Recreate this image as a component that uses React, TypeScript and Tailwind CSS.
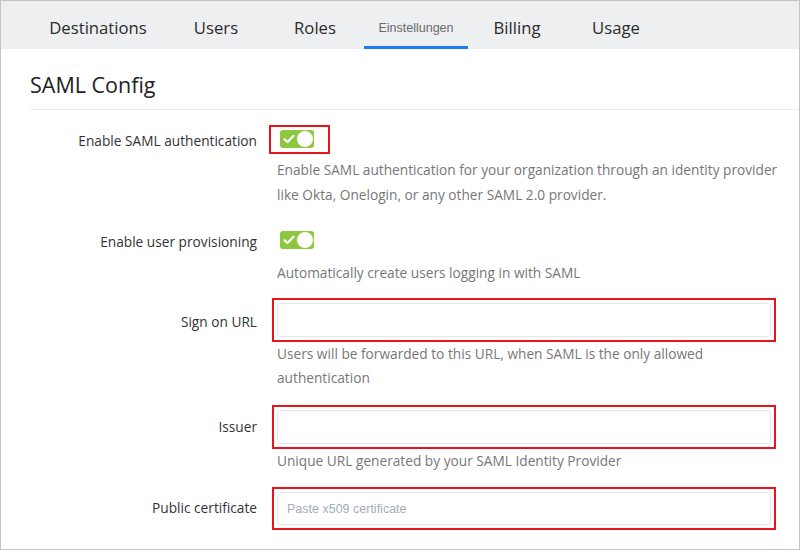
const tabs = [
  { label: "Destinations", w: "w-[116px]" },
  { label: "Users", w: "w-[120px]" },
  { label: "Roles", w: "w-[78px]" },
];

const font = { fontFamily: '"Open Sans", "Noto Sans", sans-serif' };

function Toggle() {
  return (
    <div className="flex h-[18px] w-[34px] items-center justify-between rounded-[3px] bg-[#8dc63f] pl-[3px]">
      <svg width="12" height="10" viewBox="0 0 12 10" fill="none">
        <path d="M1.5 5.2 4.5 8 10.5 1.8" stroke="white" strokeWidth="2.2" strokeLinecap="round" strokeLinejoin="round" />
      </svg>
      <div className="h-[18px] w-[18px] rounded-full border border-[#8dc63f] bg-white" />
    </div>
  );
}

function Row({ label, children, labelClass = "" }: { label: string; children: React.ReactNode; labelClass?: string }) {
  return (
    <div className="grid grid-cols-[256px_1fr] gap-x-[15px]">
      <div className={`text-right text-[13.7px] leading-[20px] text-[#333] ${labelClass}`}>{label}</div>
      <div>{children}</div>
    </div>
  );
}

function Help({ children }: { children: React.ReactNode }) {
  return <p className="pl-[5px] pr-[20px] text-[13.7px] leading-[24.5px] text-[#777]">{children}</p>;
}

function Field({ placeholder, h = "h-[34px]" }: { placeholder?: string; h?: string }) {
  return (
    <div className="mr-[23px] border-2 border-[#e8141c] p-[3px]">
      <input
        className={`${h} w-full rounded-[3px] border border-[#e1e5ec] bg-white px-[9px] text-[12.5px] outline-none placeholder:text-[#a5acb5]`}
        style={{ fontFamily: '"Liberation Sans", Arial, sans-serif' }}
        placeholder={placeholder}
      />
    </div>
  );
}

export default function App() {
  return (
    <div className="h-[550px] w-[800px] overflow-hidden border border-[#c4c4c4] bg-white" style={font}>
      <nav className="flex h-[48px] items-stretch bg-[#eeeff1] pl-[39px]">
        {tabs.map((t) => (
          <div key={t.label} className={`${t.w} flex items-center justify-center pt-[6px] text-[16.7px] text-[#2b2b2b]`}>
            {t.label}
          </div>
        ))}
        <div
          className="ml-[10px] flex w-[104px] items-center justify-center border-b-[3px] border-[#1a7df2] pt-[9px] text-[12.5px] text-[#6a6a6a]"
          style={{ fontFamily: '"Liberation Sans", Arial, sans-serif' }}
        >
          Einstellungen
        </div>
        <div className="flex w-[98px] items-center justify-center pt-[6px] text-[16.7px] text-[#2b2b2b]">Billing</div>
        <div className="flex w-[100px] items-center justify-center pt-[6px] text-[16.7px] text-[#2b2b2b]">Usage</div>
      </nav>

      <h1 className="ml-[29px] pt-[21px] pb-[9px] text-[21.5px] leading-[30px] text-[#222]">SAML Config</h1>
      <div className="ml-[29px] border-t border-[#ececec]" />

      <div className="mt-[15px]">
        <Row label="Enable SAML authentication" labelClass="pt-[6px]">
          <div className="-ml-[3px] w-[61px] border-2 border-[#e8141c] pb-[4px] pl-[9px] pt-[3px]">
            <Toggle />
          </div>
          <div className="mt-[4px]">
            <Help>
              Enable SAML authentication for your organization through an identity provider like Okta, Onelogin, or any
              other SAML 2.0 provider.
            </Help>
          </div>
        </Row>

        <div className="mt-[24px]">
          <Row label="Enable user provisioning" labelClass="pt-[1px]">
            <div className="pl-[8px]">
              <Toggle />
            </div>
            <div className="mt-[12px]">
              <Help>Automatically create users logging in with SAML</Help>
            </div>
          </Row>
        </div>

        <div className="mt-[12px]">
          <Row label="Sign on URL" labelClass="pt-[14px]">
            <Field />
            <Help>Users will be forwarded to this URL, when SAML is the only allowed authentication</Help>
          </Row>
        </div>

        <div className="mt-[14px]">
          <Row label="Issuer" labelClass="pt-[12px]">
            <Field />
            <Help>Unique URL generated by your SAML Identity Provider</Help>
          </Row>
        </div>

        <div className="mt-[14px]">
          <Row label="Public certificate" labelClass="pt-[11px]">
            <Field placeholder="Paste x509 certificate" h="h-[33px]" />
          </Row>
        </div>
      </div>
    </div>
  );
}
